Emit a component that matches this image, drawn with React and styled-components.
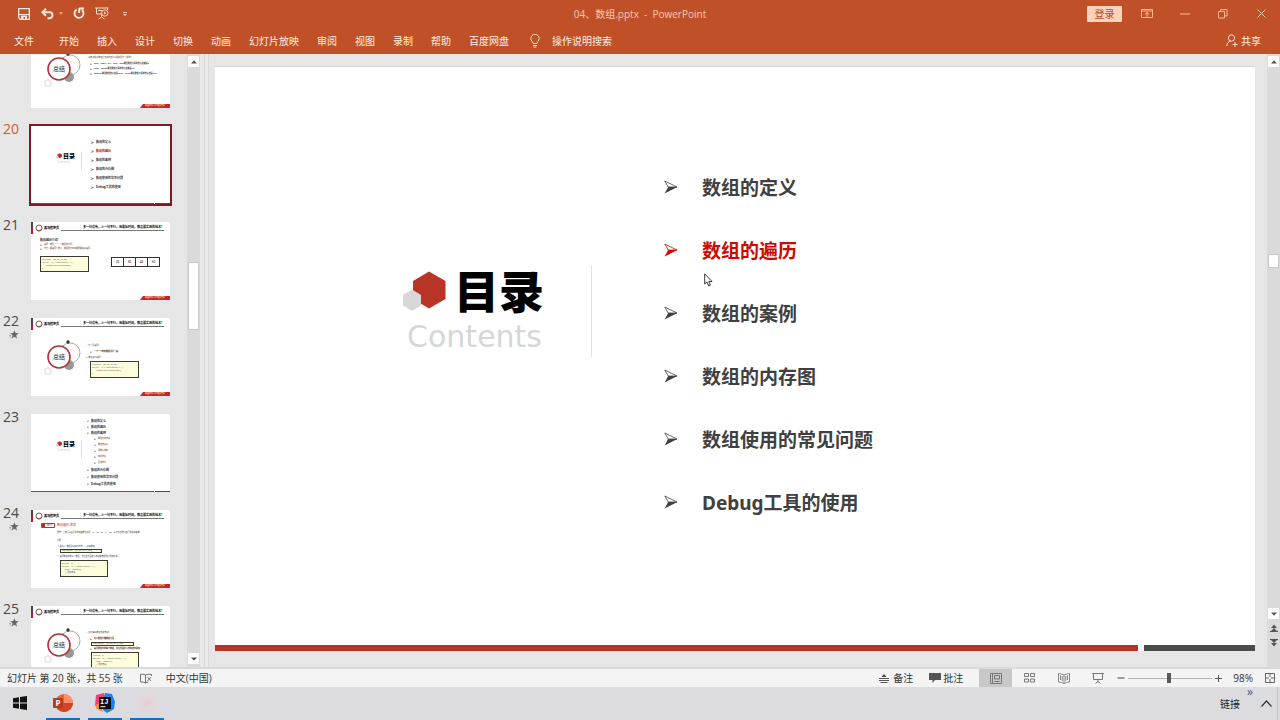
import React from "react";
import styled, { createGlobalStyle, css } from "styled-components";

const ui = `"Open Sans", "Noto Sans CJK SC", sans-serif`;
const deck = `"Noto Sans", "Noto Sans CJK SC", sans-serif`;
const red = "#b83426";

const Global = createGlobalStyle`
  * { box-sizing: border-box; }
  body { margin: 0; font-family: ${ui}; font-size: 10px; overflow: hidden; }
  button { border: 0; padding: 0; background: none; font: inherit; color: inherit; }
  ul, ol { margin: 0; padding: 0; list-style: none; }
  h1, h2, p { margin: 0; }
  svg { display: block; flex: none; }
`;

const Window = styled.div`
  display: flex;
  flex-direction: column;
  height: 100vh;
  background: #e6e6e6;
`;

/* ---------- ribbon ---------- */
const Ribbon = styled.header`
  flex: none;
  background: #c05028;
  color: #fff0e6;
`;
const TitleBar = styled.div`
  display: grid;
  grid-template-columns: 1fr auto 1fr;
  align-items: center;
  height: 27px;
`;
const QuickTools = styled.div`
  display: flex;
  align-items: center;
  padding-left: 17px;
`;
const IconButton = styled.button`
  display: flex;
  align-items: center;
  justify-content: center;
  width: ${(p) => p.$w || 14}px;
  height: 16px;
  margin-left: ${(p) => p.$gap || 0}px;
`;
const FileName = styled.h1`
  font-size: 10px;
  font-weight: 400;
  line-height: 16px;
  color: #fbc9b0;
  white-space: pre;
`;
const WindowTools = styled.div`
  display: flex;
  align-items: center;
  justify-content: flex-end;
`;
const SignIn = styled.button`
  width: 35px;
  height: 16px;
  margin-right: 6px;
  background: #fdd2bb;
  color: #a8502e;
  border-radius: 1px;
  line-height: 16px;
`;
const MenuBar = styled.nav`
  display: flex;
  align-items: center;
  height: 27px;
  gap: 18px;
  padding: 0 19px 0 14px;
  line-height: 16px;
`;
const MenuItem = styled.button`
  display: flex;
  align-items: center;
  line-height: 16px;
  gap: ${(p) => p.$gap || 0}px;
  margin-left: ${(p) => (p.$push ? "auto" : "0")};
  margin-right: ${(p) => (p.$first ? 7 : 0)}px;
`;

/* ---------- work area ---------- */
const Workspace = styled.main`
  display: flex;
  flex: 1;
  min-height: 0;
  border-bottom: 2px solid #dadada;
`;
const ThumbPane = styled.aside`
  width: 187px;
  flex: none;
  overflow: hidden;
`;
const ThumbList = styled.ol`
  margin-top: -31px;
`;
const ThumbRow = styled.li`
  display: grid;
  grid-template-columns: 31px 139px;
  height: 96px;
`;
const ThumbNumber = styled.div`
  padding-left: 3px;
  font-size: 14px;
  line-height: 20px;
  color: ${(p) => (p.$active ? "#d0583a" : "#4a4a4a")};
  svg { margin: -1px 0 0 6px; }
`;
const Thumb = styled.div`
  position: relative;
  display: flex;
  flex-direction: column;
  height: 78px;
  margin-top: 7px;
  overflow: hidden;
  background: #fff;
  font-family: ${deck};
  ${(p) =>
    p.$active &&
    css`
      outline: 2px solid #7d1a24;
    `}
`;
const ThumbHead = styled.div`
  display: flex;
  height: 12px;
  flex: none;
`;
const Marker = styled.span`
  width: 2px;
  border-top: 6px solid #444;
  background: #b01c3c;
`;
const Brand = styled.span`
  display: flex;
  align-items: center;
  gap: 1px;
  width: 28px;
  padding-left: 2px;
  font-size: 3px;
  font-weight: 900;
  line-height: 4px;
`;
const Slogan = styled.span`
  flex: 1;
  height: 9px;
  margin-right: 6px;
  border-bottom: 1px solid #777;
  font-size: 3px;
  font-weight: 700;
  line-height: 10px;
  text-align: right;
  white-space: nowrap;
`;
const ThumbBody = styled.div`
  flex: 1;
  padding-left: ${(p) => p.$left || 0}px;
  padding-top: ${(p) => p.$top || 0}px;
`;
const Line = styled.p`
  display: flex;
  align-items: center;
  gap: 2px;
  height: ${(p) => p.$h || 5}px;
  margin-left: ${(p) => p.$indent || 0}px;
  font-size: ${(p) => p.$size || 2}px;
  font-weight: ${(p) => (p.$bold ? 700 : 400)};
  line-height: 4px;
  color: ${(p) => p.$color || "#333"};
  white-space: pre;
`;
const Code = styled.pre`
  width: ${(p) => p.$w || 49}px;
  height: ${(p) => p.$h || 17}px;
  margin: 0 0 0 ${(p) => p.$indent || 0}px;
  padding: ${(p) => (p.$h === 4 ? "0 1px" : "1px")};
  overflow: hidden;
  border: 1px solid #3a3a30;
  background: #fdfddc;
  font: 2px / ${(p) => (p.$h === 4 ? 2 : 3)}px ${deck};
  color: #555;
`;
const Columns = styled.div`
  display: flex;
  gap: 22px;
  margin-top: 5px;
`;
const Cells = styled.div`
  display: grid;
  grid-template-columns: repeat(4, 12px);
  height: 10px;
  margin-top: 1px;
  border: 1px solid #333;
  border-right: 0;
  font-size: 3px;
  line-height: 8px;
  text-align: center;
  span { border-right: 1px solid #333; }
`;
const Badge = styled.span`
  width: 14px;
  height: 5px;
  border: 1px solid ${red};
  border-left-width: 4px;
  border-radius: 1px;
  text-align: center;
  line-height: 3px;
`;
const Ribbonlet = styled.div`
  align-self: flex-end;
  flex: none;
  width: 30px;
  height: 4px;
  background: #c02a22;
  clip-path: polygon(3px 0, 100% 0, 100% 100%, 0 100%);
  color: #fff;
  font-size: 2px;
  line-height: 4px;
  text-align: center;
`;
const MiniToc = styled.div`
  display: flex;
  flex: 1;
  align-items: center;
`;
const MiniTitle = styled.div`
  width: 51px;
  height: 18px;
  margin-bottom: 8px;
  padding-left: 25px;
  border-right: 1px solid #ddd;
  font-size: 6px;
  font-weight: 900;
  line-height: 8px;
  color: #000;
  div { display: flex; align-items: center; gap: 1px; }
  small { display: block; padding-left: 1px; font-size: 3px; line-height: 4px; font-weight: 400; color: #ccc; }
`;
const MiniList = styled.div`
  padding-left: ${(p) => p.$left}px;
`;
const ColorBars = styled.div`
  display: flex;
  flex: none;
  gap: ${(p) => p.$gap}px;
  height: ${(p) => p.$h}px;
  &::before { content: ""; flex: 923; background: ${red}; }
  &::after { content: ""; flex: 111; background: #4b4b4b; }
`;

const ScrollBar = styled.div`
  display: flex;
  flex-direction: column;
  flex: none;
  width: 13px;
  padding: 2px 1px 3px;
  background: #dadada;
`;
const ScrollButton = styled.button`
  display: flex;
  align-items: center;
  justify-content: center;
  flex: none;
  width: 11px;
  height: ${(p) => p.$h || 11}px;
  background: ${(p) => (p.$plain ? "transparent" : "#fff")};
`;
const Track = styled.div`
  flex: ${(p) => p.$part};
`;
const Handle = styled.div`
  flex: none;
  height: ${(p) => p.$h}px;
  background: #fff;
  border: 1px solid #c8c8c8;
`;
const Splitter = styled.div`
  width: 15px;
  flex: none;
  border-left: 4px solid #e9e9e9;
  background: linear-gradient(90deg, #d6d6d6 1px, #ebebeb 1px, #ebebeb 4px, #dadada 4px, #dadada 5px, #e6e6e6 5px);
`;
const Stage = styled.section`
  display: flex;
  flex: 1;
  min-width: 0;
  padding: 12px 12px 16px 0;
`;
const Slide = styled.article`
  position: relative;
  display: flex;
  flex: 1;
  flex-direction: column;
  background: #fff;
  border-top: 1px solid #d4d4d4;
  font-family: ${deck};
`;
const SlideBody = styled.div`
  display: flex;
  flex: 1;
  align-items: center;
  padding-bottom: 24px;
`;
const Heading = styled.div`
  display: flex;
  justify-content: flex-end;
  align-items: flex-start;
  width: 377px;
  height: 92px;
  margin-bottom: 66px;
  padding-right: 47px;
  border-right: 1px solid #e2e2e2;
  svg { margin: 6px 8px 0 0; }
`;
const HeadingText = styled.div`
  width: 90px;
  h2 { font-size: 45px; line-height: 54px; font-weight: 900; color: #000; }
  p {
    display: flex;
    justify-content: flex-end;
    padding-right: 2px;
    font-family: "DejaVu Sans", sans-serif;
    font-size: 30px;
    line-height: 36px;
    color: #d6d6d6;
  }
`;
const Agenda = styled.ul`
  padding-left: 72px;
`;
const AgendaItem = styled.li`
  display: flex;
  align-items: center;
  gap: 24px;
  height: 63px;
  font-size: 19px;
  font-weight: 700;
  color: ${(p) => (p.$current ? "#cc0a00" : "#404040")};
`;
const Pointer = styled.svg`
  position: absolute;
  left: 489px;
  top: 206px;
`;

/* ---------- status bar ---------- */
const StatusBar = styled.footer`
  display: flex;
  align-items: center;
  flex: none;
  height: 18px;
  padding: 0 5px 0 7px;
  background: #f4f4f4;
  color: #333;
  line-height: 16px;
`;
const StatusItem = styled.button`
  display: flex;
  align-items: center;
  gap: ${(p) => p.$gap || 3}px;
  margin-left: ${(p) => p.$left || 0}px;
  line-height: 16px;
  white-space: nowrap;
`;
const Spacer = styled.span`
  flex: 1;
`;
const ViewButton = styled.button`
  display: flex;
  align-items: center;
  justify-content: center;
  width: 33px;
  height: 18px;
  background: ${(p) => (p.$active ? "#c8c8c8" : "transparent")};
`;
const ZoomRange = styled.input`
  width: 84px;
  height: 12px;
  margin: 0 3px;
  appearance: none;
  background: linear-gradient(#b4b4b4, #b4b4b4) center / 100% 1px no-repeat;
  &::-webkit-slider-thumb { appearance: none; width: 4px; height: 10px; background: #5a5a5a; }
`;

/* ---------- task bar ---------- */
const TaskBar = styled.footer`
  display: flex;
  flex: none;
  height: 33px;
  background: #dcdce0;
  color: #222;
`;
const TaskButton = styled.button`
  display: flex;
  align-items: center;
  justify-content: center;
  width: ${(p) => (p.$open ? 34 : 40)}px;
  margin-right: ${(p) => (p.$open ? 8 : 6)}px;
  border-bottom: 2px solid ${(p) => (p.$open ? "#1470c4" : "transparent")};
`;
const Tray = styled.div`
  display: flex;
  align-items: center;
  margin-left: auto;
  padding-right: 2px;
  line-height: 16px;
`;
const TrayMore = styled.button`
  align-self: flex-start;
  width: 16px;
  height: 9px;
  padding-left: 4px;
  font-size: 12px;
  line-height: 6px;
  color: #555;
`;
const TrayToggle = styled.button`
  height: 33px;
  padding: 0 5px;
  border-right: 1px solid #c2c2c6;
`;

/* ---------- drawings ---------- */
const Arrow = ({ size = 14 }) => (
  <svg width={size} height={size} viewBox="0 0 14 14">
    <path d="M.8 1 13 7H4.2Z" fill="none" stroke="currentColor" strokeWidth=".8" />
    <path d="M4.2 7H13.4L.6 13.6Z" fill="currentColor" />
  </svg>
);
const Dot = () => (
  <svg width="4" height="3" viewBox="0 0 4 3"><path d="M0 .3h4L2 2.800Z" fill="#ffb48c" /></svg>
);
const Tri = ({ down }) => (
  <svg width="6" height="4" viewBox="0 0 6 4">
    <path d={down ? "M0 .5h6L3 3.8Z" : "M0 3.5h6L3 .2Z"} fill="#555" />
  </svg>
);
const DoubleTri = ({ down }) => (
  <svg width="8" height="8" viewBox="0 0 8 8" fill="#555">
    {down ? <path d="M0 0h8v1H0ZM1 1h6L4 4ZM1 4h6L4 7.5Z" /> : <path d="M0 7h8v1H0ZM1 7h6L4 4ZM1 4h6L4 .5Z" />}
  </svg>
);
const Hexes = ({ w = 43, h = 41 }) => (
  <svg width={w} height={h} viewBox="0 0 43 41">
    <path d="M26 .5 42.500 10V28L26 37.500 10 28V10Z" fill="#b83426" />
    <path d="M9 18.500 18 24V34.500L9 40 0 34.500V24Z" fill="#d8d8d8" />
  </svg>
);
const Star = () => (
  <svg width="10" height="9" viewBox="0 0 10 9">
    <path d="M5.400.3 6.500 3.100 9.600 3.300 7.200 5.200 8 8.400 5.400 6.700 2.600 8.400 3.600 5.200 1.200 3.300 4.300 3.100Z" fill="#666" />
    <path d="M0 5.500h2M.5 7h1.500" stroke="#888" strokeWidth=".7" />
  </svg>
);
const Orbit = () => (
  <svg width="52" height="60" viewBox="0 0 52 60" fill="none">
    <circle cx="39" cy="35" r="10" stroke="#a5a5a5" strokeWidth=".9" />
    <circle cx="38" cy="47" r="5" fill="#979797" />
    <circle cx="28" cy="39" r="11" fill="#fff" stroke="#b3333d" strokeWidth="1.600" />
    <circle cx="37" cy="24" r="1.700" fill="#333" />
    <circle cx="17" cy="53" r="3.300" stroke="#e3c6c8" strokeWidth=".8" />
    <text x="28" y="41" fontSize="6" textAnchor="middle" fill="#222">总结</text>
  </svg>
);

/* ---------- thumbnails ---------- */
const Head = () => (
  <ThumbHead>
    <Marker />
    <Brand>
      <svg width="8" height="8" viewBox="0 0 8 8"><circle cx="4" cy="4" r="3" fill="none" stroke="#444" strokeWidth=".8" /><path d="M1.500 6Q4 8 6.500 5.500" fill="none" stroke="#b83426" /></svg>
      黑马程序员
    </Brand>
    <Slogan>多一句没有，少一句不行，用最短时间，教会最实用的技术！</Slogan>
  </ThumbHead>
);
const Foot = () => <Ribbonlet>高级软件人才培训专家</Ribbonlet>;
const OrbitLayer = styled.div`
  position: absolute;
  left: 0;
  top: 0;
`;
const Summary = ({ children, top, plain }) => (
  <>
    <OrbitLayer><Orbit /></OrbitLayer>
    {plain ? <ThumbHead /> : <Head />}
    <ThumbBody $left={55} $top={top}>{children}</ThumbBody>
    <Foot />
  </>
);
const TocTitle = () => (
  <MiniTitle>
    <div><Hexes w={6} h={6} />目录</div>
    <small>Contents</small>
  </MiniTitle>
);

const topics = ["数组的定义", "数组的遍历", "数组的案例", "数组的内存图", "数组使用的常见问题", "Debug工具的使用"];
const loopCode = "int[] ages = {20, 30, 40, 50};\nfor (int i = 0; i < ages.length; i++) {\n        System.out.println(ages[i]);\n}";
const sumCode = "int sum = 0;\nfor (int i = 0; i < money.length; i++) {\n      sum += money[i];\n      // 累加求和\n}";

const Slide19 = () => (
  <Summary top={13} plain>
    <Line>1. 动态初始化数组后元素的默认值规则是什么样的？</Line>
    <Line $h={7} $indent={4} $bold><Arrow size={2} />byte、short、int 、char、long类型数组元素的默认值都是0</Line>
    <Line $h={4} $indent={4} $bold><Arrow size={2} />float、double类型数组元素的默认值都是0.0</Line>
    <Line $h={6} $indent={4} $bold><Arrow size={2} />boolean类型数组默认值是false、String类型数组元素的默认值是null</Line>
  </Summary>
);
const Slide20 = () => (
  <>
    <MiniToc>
      <TocTitle />
      <MiniList $left={9}>
        {topics.map((t, i) => (
          <Line key={t} $h={9} $size={3} $bold $color={i === 1 ? "#c00" : "#333"}><Arrow size={3} />{t}</Line>
        ))}
      </MiniList>
    </MiniToc>
    <ColorBars $h={1} $gap={1} />
  </>
);
const Slide21 = () => (
  <>
    <Head />
    <ThumbBody $left={9} $top={3}>
      <Line $size={3} $bold>数组遍历介绍</Line>
      <Line><Arrow size={2} />遍历：就是一个一个数据的访问。</Line>
      <Line $h={4}><Arrow size={2} />为什么要遍历？搜索、数据统计等等都需要用到遍历。</Line>
      <Columns>
        <Code $h={16}>{loopCode}</Code>
        <Cells><span>20</span><span>30</span><span>40</span><span>50</span></Cells>
      </Columns>
    </ThumbBody>
    <Foot />
  </>
);
const Slide22 = () => (
  <Summary top={13}>
    <Line>1. 什么是遍历？</Line>
    <Line $h={7} $indent={4} $bold><Arrow size={2} />一个一个的把数据访问一遍</Line>
    <Line $h={6}>2. 数组如何遍历？</Line>
    <Code $indent={4}>{loopCode}</Code>
  </Summary>
);
const Slide23 = () => (
  <>
    <MiniToc>
      <TocTitle />
      <MiniList $left={5}>
        {topics.slice(0, 3).map((t) => <Line key={t} $h={6} $size={3} $bold><Arrow size={2} />{t}</Line>)}
        {["数组元素求和", "数组求最值", "猜数字游戏", "随机排名", "冒泡排序"].map((t) => (
          <Line key={t} $h={6} $indent={7}><Arrow size={2} />{t}</Line>
        ))}
        {topics.slice(3).map((t) => <Line key={t} $h={7} $size={3} $bold><Arrow size={2} />{t}</Line>)}
      </MiniList>
    </MiniToc>
    <ColorBars $h={1} $gap={1} />
  </>
);
const Slide24 = () => (
  <>
    <Head />
    <ThumbBody $left={10}>
      <Line $h={6} $size={3} $color={red}><Badge>案例</Badge>数组遍历-求和</Line>
      <Line $h={10} $indent={16}>需求：某部门5名员工的销售额分别是：16、26、36、6、100，请计算出他们部门的总销售额。</Line>
      <Line $h={6} $indent={16}>分析：</Line>
      <Line $indent={16}>① 把这5个数据拿到程序中去 ---&gt; 使用数组</Line>
      <Code $indent={19} $w={42} $h={4}>{"int[] money = {16, 26, 36, 6, 100};"}</Code>
      <Line $h={7} $indent={16}>② 遍历数组中的每个数据，然后在外面定义求和变量把他们累加起来。</Line>
      <Code $indent={19} $w={48}>{sumCode}</Code>
    </ThumbBody>
    <Foot />
  </>
);
const Slide25 = () => (
  <Summary top={12}>
    <Line>1. 如何实现数组元素求和？</Line>
    <Line $h={7} $indent={4} $bold><Arrow size={2} />定义数组存储数据元素</Line>
    <Code $indent={5} $w={43} $h={4}>{"int[] money = {16, 26, 36, 6, 100};"}</Code>
    <Line $h={6} $indent={4} $bold><Arrow size={2} />遍历数组中的每个数据，并在外面定义求和变量累加</Line>
    <Code $indent={5} $w={48}>{sumCode}</Code>
  </Summary>
);

const thumbs = [
  { n: 19, View: Slide19, hideNumber: true },
  { n: 20, View: Slide20, active: true },
  { n: 21, View: Slide21 },
  { n: 22, View: Slide22, star: true },
  { n: 23, View: Slide23 },
  { n: 24, View: Slide24, star: true },
  { n: 25, View: Slide25, star: true },
];

const menus = ["文件", "开始", "插入", "设计", "切换", "动画", "幻灯片放映", "审阅", "视图", "录制", "帮助", "百度网盘"];

export default function App() {
  return (
    <Window>
      <Global />
      <Ribbon>
        <TitleBar>
          <QuickTools>
            <IconButton aria-label="保存">
              <svg width="12" height="12" viewBox="0 0 12 12" fill="none" stroke="#ffe9dc"><path d="M.7.7h10.600v10.600H2.200L.7 9.800Z" strokeWidth="1.300" /><path d="M1 6.500h10" /><path d="M3 7.500h6V11H7V9H5.500v2H3Z" fill="#ffe9dc" stroke="none" /></svg>
            </IconButton>
            <IconButton aria-label="撤消" $gap={9}>
              <svg width="13" height="12" viewBox="0 0 13 12" fill="none" stroke="#ffe9dc" strokeWidth="2"><path d="M5 .7 1.500 4.200 5 7.700M2 4.200H8.500a3 3 0 0 1 0 6H6.500" /></svg>
            </IconButton>
            <IconButton aria-label="撤消选项" $w={4} $gap={5}><Dot /></IconButton>
            <IconButton aria-label="重复" $gap={9}>
              <svg width="12" height="13" viewBox="0 0 12 13" fill="none" stroke="#ffe9dc" strokeWidth="1.900"><path d="M3.600 2.600A4.500 4.500 0 1 0 9 3M6.200 1v5M6 1.500h5" /></svg>
            </IconButton>
            <IconButton aria-label="从头开始" $gap={9}>
              <svg width="14" height="13" viewBox="0 0 14 13" fill="none" stroke="#ffd9c6"><path d="M0 1h13.500M1.500 1v6H6M12.500 1v2M3 3.500h4M6.500 7v3M3.500 12l3-2 3 2" /><circle cx="9.800" cy="6" r="3.200" fill="#c05028" /><path d="M9 4.500v3L11.300 6Z" fill="#ffd9c6" stroke="none" /></svg>
            </IconButton>
            <IconButton aria-label="自定义快速访问工具栏" $w={4} $gap={14}>
              <svg width="4" height="4" viewBox="0 0 4 4"><path d="M0 0h4v1H0ZM0 2h4L2 4Z" fill="#ffd0b8" /></svg>
            </IconButton>
          </QuickTools>
          <FileName>{"04、数组.pptx  -  PowerPoint"}</FileName>
          <WindowTools>
            <SignIn>登录</SignIn>
            <IconButton aria-label="功能区显示选项" $w={38}>
              <svg width="12" height="9" viewBox="0 0 12 9" fill="none" stroke="#ffb993"><path d="M.5.5h11v8H.5ZM.5 2h11M6 8V3.500M3.800 5.500 6 3.500l2.200 2" /></svg>
            </IconButton>
            <IconButton aria-label="最小化" $w={38}>
              <svg width="10" height="2" viewBox="0 0 10 2"><path d="M0 1h10" stroke="#ffb993" /></svg>
            </IconButton>
            <IconButton aria-label="还原" $w={38}>
              <svg width="10" height="10" viewBox="0 0 10 10" fill="none" stroke="#ffb993"><path d="M.5 2.500h6v6.500h-6ZM2.500 2.500v-2h6.500v6.500H6.500" /></svg>
            </IconButton>
            <IconButton aria-label="关闭" $w={38}>
              <svg width="9" height="9" viewBox="0 0 9 9"><path d="M.5.5l8 8M8.500.5l-8 8" stroke="#ffc9ad" /></svg>
            </IconButton>
          </WindowTools>
        </TitleBar>
        <MenuBar>
          {menus.map((m, i) => <MenuItem key={m} $first={i === 0}>{m}</MenuItem>)}
          <MenuItem $gap={10}>
            <svg width="15" height="14" viewBox="-3 0 15 14" fill="none" stroke="#ffd9c6"><path d="M3 9.500C3 7.500.8 6.800.8 4.500a4.200 4.200 0 0 1 8.400 0C9.200 6.800 7 7.500 7 9.500ZM3 11.500h4M3.500 13h3" /></svg>
            操作说明搜索
          </MenuItem>
          <MenuItem $push $gap={3}>
            <svg width="12" height="13" viewBox="0 0 12 13" fill="none" stroke="#ffd9c6"><circle cx="5.500" cy="4" r="3.200" /><path d="M.8 12c0-3 1.700-4.500 4-4.800M9 8v5M6.500 10.500h5" /></svg>
            共享
          </MenuItem>
        </MenuBar>
      </Ribbon>

      <Workspace>
        <ThumbPane>
          <ThumbList>
            {thumbs.map(({ n, View, active, star, hideNumber }) => (
              <ThumbRow key={n}>
                <ThumbNumber $active={active}>{!hideNumber && n}{star && <Star />}</ThumbNumber>
                <Thumb $active={active}><View /></Thumb>
              </ThumbRow>
            ))}
          </ThumbList>
        </ThumbPane>
        <ScrollBar>
          <ScrollButton aria-label="向上滚动"><Tri /></ScrollButton>
          <Track $part={196} />
          <Handle $h={68} />
          <Track $part={324} />
          <ScrollButton aria-label="向下滚动"><Tri down /></ScrollButton>
        </ScrollBar>
        <Splitter />
        <Stage>
          <Slide>
            <SlideBody>
              <Heading>
                <Hexes />
                <HeadingText>
                  <h2>目录</h2>
                  <p>Contents</p>
                </HeadingText>
              </Heading>
              <Agenda>
                {topics.map((t, i) => (
                  <AgendaItem key={t} $current={i === 1}><Arrow />{t}</AgendaItem>
                ))}
              </Agenda>
            </SlideBody>
            <ColorBars $h={6} $gap={6} />
            <Pointer width="9" height="14" viewBox="0 0 9 14">
              <path d="M.7.8V11l2.300-2 1.700 4 1.700-.8L4.800 8.500H8Z" fill="#fff" stroke="#222" strokeWidth=".9" />
            </Pointer>
          </Slide>
        </Stage>
        <ScrollBar>
          <ScrollButton aria-label="上翻"><Tri /></ScrollButton>
          <Track $part={187} />
          <Handle $h={14} />
          <Track $part={341} />
          <ScrollButton aria-label="下翻"><Tri down /></ScrollButton>
          <ScrollButton aria-label="上一张幻灯片" $plain $h={18}><DoubleTri /></ScrollButton>
          <ScrollButton aria-label="下一张幻灯片" $plain $h={11}><DoubleTri down /></ScrollButton>
          <Track $part={16} />
        </ScrollBar>
      </Workspace>

      <StatusBar>
        <StatusItem>幻灯片 第 20 张，共 55 张</StatusItem>
        <StatusItem $left={17} aria-label="拼写检查">
          <svg width="12" height="11" viewBox="0 0 12 11" fill="none" stroke="#666" strokeWidth=".9"><path d="M5.500 2v8M5.500 2Q3 .5.500 1.500V9Q3 8.500 5.500 10 7 9 8.500 9M5.500 2Q8 .5 11.500 1.500V3M7.500 4l3.500 4M11 4 7.500 8" /></svg>
        </StatusItem>
        <StatusItem $left={14}>中文(中国)</StatusItem>
        <Spacer />
        <StatusItem $gap={4}>
          <svg width="10" height="9" viewBox="0 0 10 9"><path d="M0 4.500h10M0 6.500h10M1.500 8.500h7" stroke="#555" /><path d="M2.500 3h5L5 0Z" fill="#444" /></svg>
          备注
        </StatusItem>
        <StatusItem $left={16} $gap={2}>
          <svg width="12" height="10" viewBox="0 0 12 10"><path d="M0 0h12v7H6L3.500 10V7H0Z" fill="#555" /></svg>
          批注
        </StatusItem>
        <StatusItem $left={16} as="div" $gap={1}>
          <ViewButton $active aria-label="普通视图">
            <svg width="12" height="11" viewBox="0 0 12 11" fill="none" stroke="#777"><path d="M.5.5h11v10H.5ZM2.500 1v9M4.500 2.500h5v3.500h-5ZM4.500 8.500h5" /></svg>
          </ViewButton>
          <ViewButton aria-label="幻灯片浏览">
            <svg width="11" height="10" viewBox="0 0 11 10" fill="none" stroke="#777"><path d="M.5.5h4v3h-4ZM6.500.5h4v3h-4ZM.5 6h4v3h-4ZM6.500 6h4v3h-4Z" /></svg>
          </ViewButton>
          <ViewButton aria-label="阅读视图">
            <svg width="12" height="11" viewBox="0 0 12 11" fill="none" stroke="#888"><path d="M6 2v8.500M6 2Q3 .5.500.500v8.500q3 0 5.500 1.500Q8.500 9 11.500 9V.5Q9 .5 6 2M2.500 2.500V7M4.200 3v5M7.800 3v5M9.500 2.500V7" /></svg>
          </ViewButton>
          <ViewButton aria-label="幻灯片放映">
            <svg width="12" height="11" viewBox="0 0 12 11" fill="none" stroke="#777"><path d="M0 .5h12M1.500 1v5.500h9V1M6 6.500v2M3.500 10.500 6 8.500l2.500 2" /></svg>
          </ViewButton>
        </StatusItem>
        <StatusItem $left={3} aria-label="缩小">
          <svg width="8" height="8" viewBox="0 0 8 8"><path d="M.5 4h7" stroke="#444" /></svg>
        </StatusItem>
        <ZoomRange type="range" min="0" max="100" defaultValue="49" aria-label="缩放" />
        <StatusItem aria-label="放大">
          <svg width="7" height="7" viewBox="0 0 7 7"><path d="M0 3.500h7M3.500 0v7" stroke="#555" /></svg>
        </StatusItem>
        <StatusItem $left={11}>98%</StatusItem>
        <StatusItem $left={12} aria-label="适应窗口">
          <svg width="10" height="10" viewBox="0 0 10 10" fill="none" stroke="#666"><path d="M.5.5h9v9h-9ZM5 1v3M5 6v3M1 5h3M6 5h3" /></svg>
        </StatusItem>
      </StatusBar>

      <TaskBar>
        <TaskButton aria-label="开始">
          <svg width="14" height="14" viewBox="0 0 14 14" fill="#111"><path d="M0 2.200 6 1.300V6.500H0ZM7 1.100 14 0V6.500H7ZM0 7.500H6v5.200L0 11.800ZM7 7.500h7V14L7 12.900Z" /></svg>
        </TaskButton>
        <TaskButton $open aria-label="PowerPoint">
          <svg width="20" height="18" viewBox="0 0 20 18"><circle cx="11" cy="9" r="9" fill="#e8633a" /><path d="M11 0a9 9 0 0 1 9 9H11Z" fill="#ff9068" /><path d="M2 9h18a9 9 0 0 1-18 0" fill="#cf4526" /><rect y="4" width="10" height="10" rx="1" fill="#b9391c" /><text x="2.500" y="12" fontSize="8" fontWeight="700" fill="#fff">P</text></svg>
        </TaskButton>
        <TaskButton $open aria-label="IntelliJ IDEA">
          <svg width="20" height="20" viewBox="0 0 20 20"><path d="M1 2 9 0 12 12 3 16 0 12Z" fill="#f0417c" /><path d="M0 12 5 10 8 19 2 16Z" fill="#f98a2b" /><path d="M10 0 17 1 20 9 19 16 12 20 8 17Z" fill="#1483ea" /><rect x="4" y="4" width="12" height="12" fill="#0c0c0c" /><text x="5" y="11" fontSize="7" fontWeight="700" fontFamily="Liberation Mono, monospace" fill="#fff">IJ</text><path d="M5.500 13.700h5" stroke="#fff" /></svg>
        </TaskButton>
        <TaskButton $open aria-label="录屏">
          <svg width="18" height="18" viewBox="0 0 18 18"><rect width="18" height="18" rx="3" fill="#e1d7dc" /><path d="M5 13V9l4-4h4v5l-4 3Z" fill="#e6d0d6" /></svg>
        </TaskButton>
        <Tray>
          <span>链接</span>
          <TrayMore aria-label="更多">»</TrayMore>
          <TrayToggle aria-label="显示隐藏的图标">
            <svg width="11" height="7" viewBox="0 0 11 7"><path d="M.5 6.500 5.500 1l5 5.500" fill="none" stroke="#333" strokeWidth="1.200" /></svg>
          </TrayToggle>
        </Tray>
      </TaskBar>
    </Window>
  );
}
